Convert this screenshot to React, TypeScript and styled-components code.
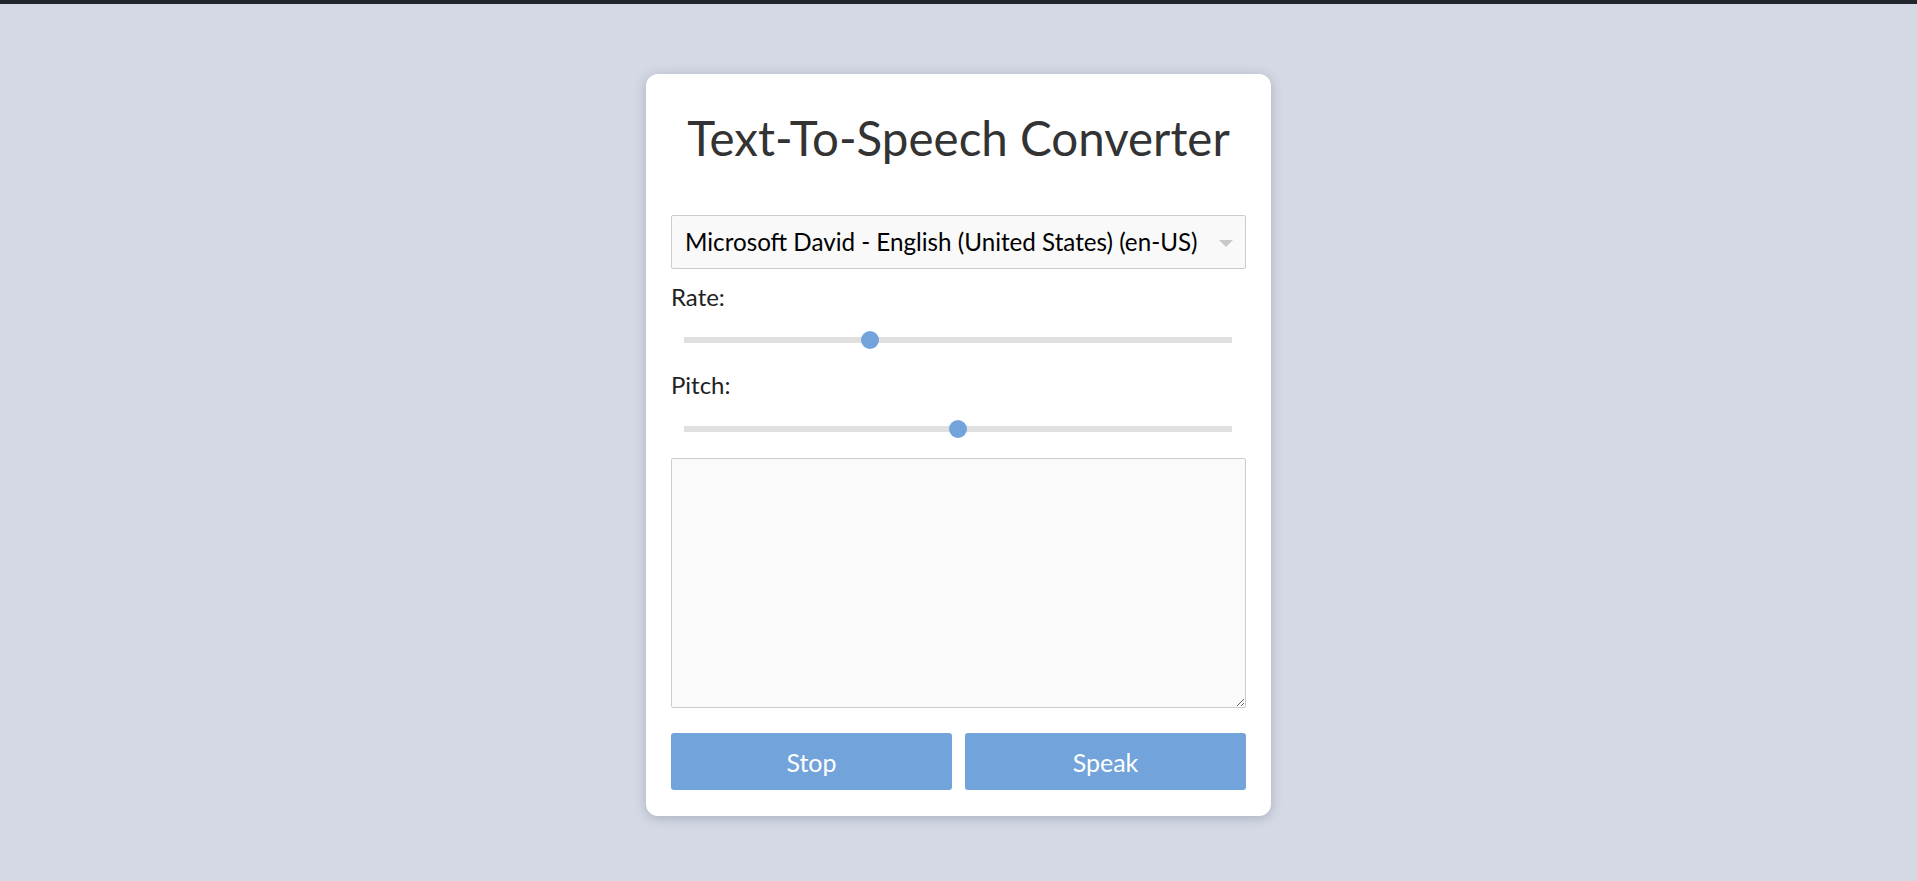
import React, { useState } from "react";
import styled, { createGlobalStyle } from "styled-components";

const GlobalStyle = createGlobalStyle`
  html, body {
    margin: 0;
    padding: 0;
    background: #d5d9e5;
    font-family: Lato, "Liberation Sans", Arial, sans-serif;
  }
  * { box-sizing: border-box; }
`;

const TopBar = styled.div`
  height: 4px;
  background: #22262c;
`;

const Page = styled.main`
  display: flex;
  justify-content: center;
  padding-top: 70px;
  min-height: 877px;
`;

const Card = styled.section`
  width: 625px;
  align-self: flex-start;
  background: #ffffff;
  border-radius: 12px;
  padding: 25px 25px 26px;
  box-shadow: 0 2px 12px rgba(40, 50, 80, 0.25);
  display: flex;
  flex-direction: column;
`;

const Title = styled.h1`
  margin: 15px 0 53px;
  font-size: 47.5px;
  line-height: 1;
  font-weight: 400;
  color: #333333;
  text-align: center;
`;

const SelectWrap = styled.div`
  position: relative;
  &::after {
    content: "";
    position: absolute;
    right: 13px;
    top: 25px;
    border-left: 7px solid transparent;
    border-right: 7px solid transparent;
    border-top: 7px solid #c8c8c8;
    pointer-events: none;
  }
`;

const Select = styled.select`
  appearance: none;
  -webkit-appearance: none;
  width: 100%;
  height: 54px;
  padding: 0 40px 0 13px;
  font-family: inherit;
  font-size: 24.2px;
  color: #000;
  background: #f9f9f9;
  border: 1px solid #cccccc;
  border-radius: 2px;
  outline: none;
`;

const Label = styled.label<{ $top: number }>`
  display: block;
  margin-top: ${(p) => p.$top}px;
  font-size: 24px;
  line-height: 28.8px;
  color: #222222;
`;

const Range = styled.input`
  -webkit-appearance: none;
  appearance: none;
  display: block;
  width: calc(100% - 27px);
  height: 18px;
  margin: 20px 0 0 13px;
  background: transparent;
  outline: none;

  &::-webkit-slider-runnable-track {
    height: 6px;
    background: #e0e0e0;
    border: none;
  }
  &::-webkit-slider-thumb {
    -webkit-appearance: none;
    appearance: none;
    width: 18px;
    height: 18px;
    margin-top: -6px;
    border-radius: 50%;
    background: #72a3da;
    border: none;
  }
  &::-moz-range-track {
    height: 6px;
    background: #e0e0e0;
  }
  &::-moz-range-thumb {
    width: 18px;
    height: 18px;
    border-radius: 50%;
    background: #72a3da;
    border: none;
  }
`;

const TextArea = styled.textarea`
  display: block;
  width: 100%;
  height: 250px;
  margin-top: 20px;
  padding: 10px;
  font-family: inherit;
  font-size: 20px;
  background: #fafafa;
  border: 1px solid #cccccc;
  border-radius: 2px;
  outline: none;
`;

const ButtonRow = styled.div`
  display: grid;
  grid-template-columns: 1fr 1fr;
  gap: 13px;
  margin-top: 25px;
`;

const Button = styled.button`
  height: 57px;
  border: none;
  border-radius: 3px;
  background: #72a3da;
  color: #ffffff;
  font-family: inherit;
  font-size: 25px;
  cursor: pointer;
`;

export default function App() {
  const [rate, setRate] = useState(1);
  const [pitch, setPitch] = useState(1);
  const [text, setText] = useState("");

  return (
    <>
      <GlobalStyle />
      <TopBar />
      <Page>
        <Card>
          <Title>Text-To-Speech Converter</Title>
          <SelectWrap>
            <Select defaultValue="david">
              <option value="david">Microsoft David - English (United States) (en-US)</option>
              <option value="zira">Microsoft Zira - English (United States) (en-US)</option>
            </Select>
          </SelectWrap>
          <Label $top={14} htmlFor="rate">Rate:</Label>
          <Range
            id="rate"
            type="range"
            min={0.5}
            max={2}
            step={0.1}
            value={rate}
            onChange={(e) => setRate(Number(e.target.value))}
          />
          <Label $top={22} htmlFor="pitch">Pitch:</Label>
          <Range
            id="pitch"
            type="range"
            min={0}
            max={2}
            step={0.1}
            value={pitch}
            onChange={(e) => setPitch(Number(e.target.value))}
          />
          <TextArea value={text} onChange={(e) => setText(e.target.value)} />
          <ButtonRow>
            <Button>Stop</Button>
            <Button>Speak</Button>
          </ButtonRow>
        </Card>
      </Page>
    </>
  );
}
